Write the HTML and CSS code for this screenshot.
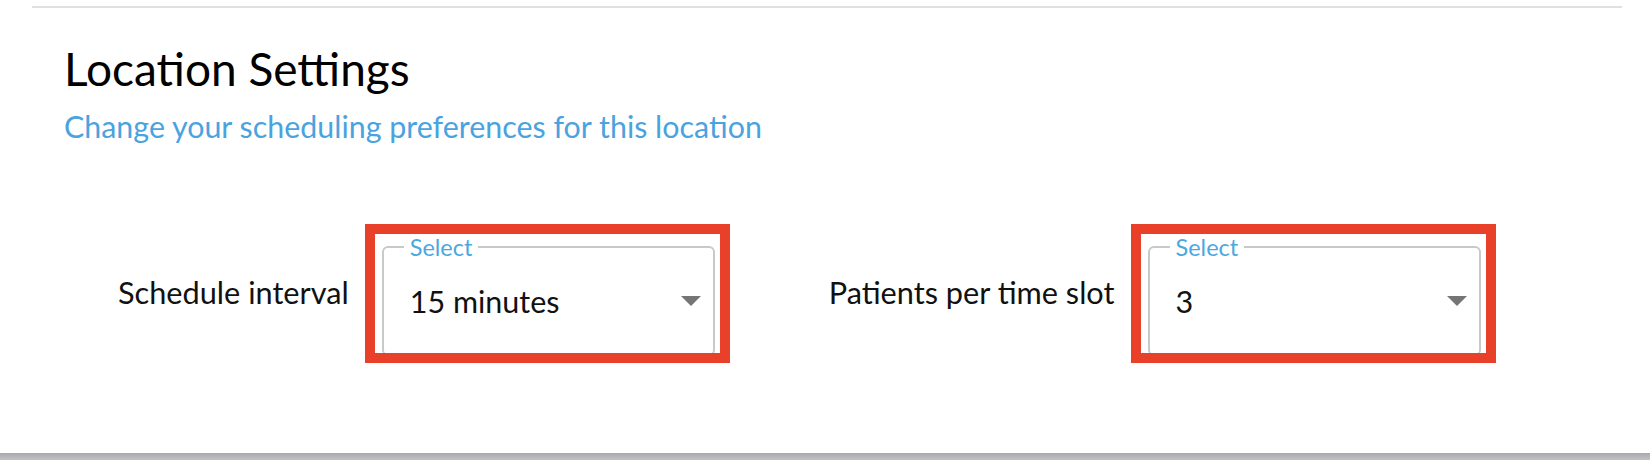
FILE: index.html
```html
<!DOCTYPE html>
<html lang="en">
<head>
<meta charset="utf-8">
<title>Location Settings</title>
<link rel="stylesheet" href="styles.css">
</head>
<body>
<div class="card">
  <div class="divider"></div>
  <header class="head">
    <h1 class="title">Location Settings</h1>
    <p class="subtitle">Change your scheduling preferences for this location</p>
  </header>
  <div class="row">
    <div class="group">
      <span class="label">Schedule interval</span>
      <div class="highlight">
        <fieldset class="select">
          <legend class="select-legend">Select</legend>
          <div class="select-control">
            <span class="select-value">15 minutes</span>
            <span class="caret"></span>
          </div>
        </fieldset>
      </div>
    </div>
    <div class="group">
      <span class="label">Patients per time slot</span>
      <div class="highlight">
        <fieldset class="select">
          <legend class="select-legend">Select</legend>
          <div class="select-control">
            <span class="select-value">3</span>
            <span class="caret"></span>
          </div>
        </fieldset>
      </div>
    </div>
  </div>
</div>
</body>
</html>
```
FILE: styles.css
```css
* { box-sizing: border-box; }

html {
  background: #ffffff;
}

body {
  margin: 0;
  min-height: 100vh;
  background: linear-gradient(to bottom, #ffffff 0, #ffffff 453px, #a9a9ad 453px, #c2c2c6 100%);
  font-family: Lato, "Liberation Sans", sans-serif;
}

.card {
  height: 453px;
  padding-top: 6px;
  background: #ffffff;
  border-radius: 0 0 6px 6px;
}

.divider {
  height: 2px;
  margin: 0 28px 0 32px;
  background: #e0e0e0;
}

.head {
  padding-left: 64px;
}

.title {
  margin: 33px 0 0;
  font-size: 46px;
  font-weight: 400;
  line-height: 1.2;
  color: #000000;
}

.subtitle {
  margin: 11.6px 0 0;
  font-size: 30.4px;
  line-height: 1.2;
  color: #4aa3df;
}

.row {
  display: flex;
  align-items: center;
  gap: 114px;
  margin-top: 91.25px;
  padding-left: 118px;
}

.group {
  display: flex;
  align-items: center;
  gap: 33px;
}

.label {
  margin-bottom: 3.5px;
  font-size: 30.7px;
  line-height: 1.2;
  color: #111111;
}

.highlight {
  position: relative;
}

.highlight::after {
  content: "";
  position: absolute;
  top: -11.75px;
  left: -17px;
  right: -15px;
  bottom: -7px;
  border: 10px solid #e9402a;
  pointer-events: none;
}

.select {
  width: 333px;
  min-width: 0;
  margin: 0;
  padding: 24.15px 12px 34px 26px;
  border: 2px solid #c9c9c9;
  border-radius: 6px;
}

.select-legend {
  margin-left: -6px;
  padding: 0 6px;
  font-size: 23.5px;
  line-height: 1;
  color: #4aa8e0;
}

.select-control {
  display: flex;
  align-items: center;
  justify-content: space-between;
}

.select-value {
  font-size: 30.5px;
  line-height: 1.2;
  color: #111111;
}

.caret {
  width: 0;
  height: 0;
  border-left: 10px solid transparent;
  border-right: 10px solid transparent;
  border-top: 10px solid #757575;
}
```
